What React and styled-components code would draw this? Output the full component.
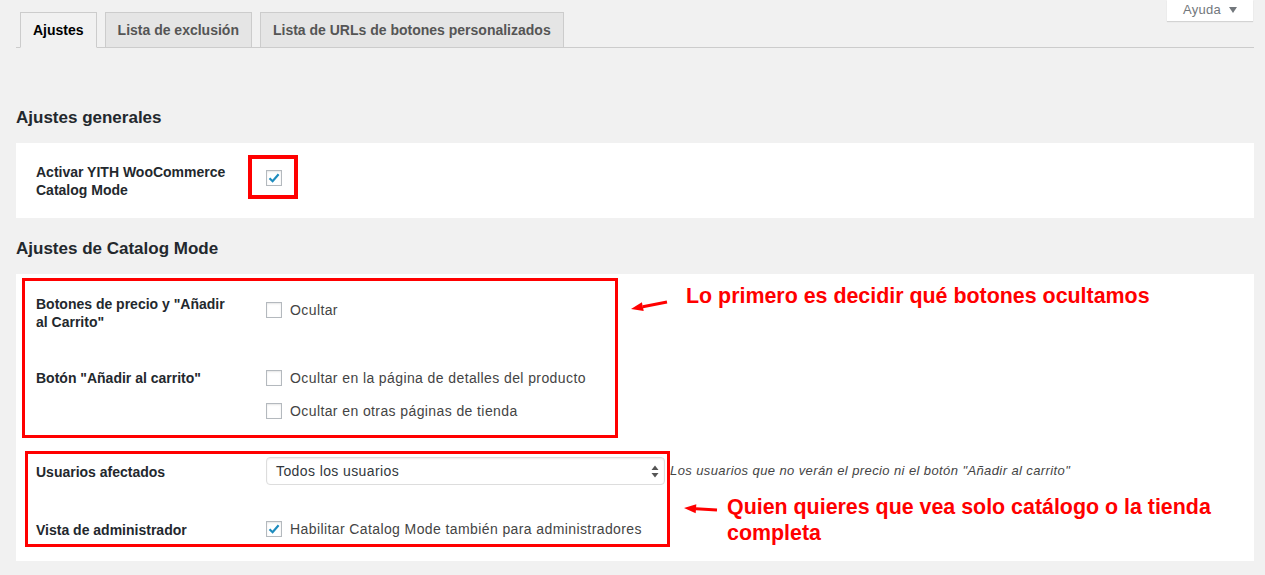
import styled, { createGlobalStyle } from "styled-components";

const GlobalStyle = createGlobalStyle`
  body {
    margin: 0;
    background: #f1f1f1;
    font-family: "Liberation Sans", Arial, sans-serif;
    color: #23282d;
  }
`;

const Page = styled.div`
  padding: 0 11px 0 16px;
`;

const Header = styled.header`
  display: grid;
`;

const TabBar = styled.nav`
  grid-area: 1 / 1;
  display: flex;
  gap: 8px;
  padding: 12px 0 0 4px;
  border-bottom: 1px solid #ccc;
`;

const Tab = styled.a`
  padding: 5px 12px;
  margin-bottom: -1px;
  font-size: 14px;
  font-weight: 700;
  line-height: 24px;
  border: 1px solid #ccc;
  border-bottom-color: ${(p) => (p.$active ? "#f1f1f1" : "#ccc")};
  background: ${(p) => (p.$active ? "#f1f1f1" : "#e5e5e5")};
  color: ${(p) => (p.$active ? "#000" : "#555")};
  text-decoration: none;
`;

const HelpButton = styled.button`
  grid-area: 1 / 1;
  justify-self: end;
  align-self: start;
  margin-right: 1px;
  width: 86px;
  height: 21px;
  padding: 0 0 2px;
  border: none;
  background: #fff;
  box-shadow: 0 1px 1px rgba(0, 0, 0, 0.12);
  font-family: "Liberation Sans", Arial, sans-serif;
  font-size: 13px;
  letter-spacing: 0.3px;
  color: #72777c;
  display: flex;
  align-items: center;
  justify-content: center;
  gap: 8px;
`;

const SectionTitle = styled.h2`
  margin: ${(p) => p.$top}px 0 ${(p) => p.$bottom}px;
  font-size: 17px;
  font-weight: 700;
  line-height: 24px;
  color: #23282d;
`;

const Panel = styled.section`
  position: relative;
  background: #fff;
  padding: 0 20px;
`;

const Row = styled.div`
  display: grid;
  grid-template-columns: 230px 1fr;
  padding: ${(p) => p.$pt}px 0 ${(p) => p.$pb}px;
`;

const Label = styled.div`
  max-width: 200px;
  margin-top: ${(p) => p.$offset || 0}px;
  font-size: 14px;
  font-weight: 700;
  line-height: 18px;
  color: #23282d;
`;

const Control = styled.div`
  display: flex;
  flex-direction: column;
  gap: 13px;
  margin-top: ${(p) => p.$offset || 0}px;
`;

const Option = styled.label`
  display: flex;
  align-items: center;
  gap: 8px;
  height: 20px;
  font-size: 14px;
  letter-spacing: 0.4px;
  color: #444;
`;

const Box = styled.span`
  width: 16px;
  height: 16px;
  box-sizing: border-box;
  border: 1px solid #b4b9be;
  box-shadow: inset 0 1px 2px rgba(0, 0, 0, 0.1);
  background: #fff;
  display: flex;
  align-items: center;
  justify-content: center;
`;

const SelectLine = styled.div`
  display: flex;
  align-items: center;
  gap: 5px;
`;

const Select = styled.div`
  width: 399px;
  height: 28px;
  box-sizing: border-box;
  padding: 0 5px 0 9px;
  border: 1px solid #ddd;
  border-radius: 4px;
  box-shadow: inset 0 1px 2px rgba(0, 0, 0, 0.07);
  display: flex;
  align-items: center;
  justify-content: space-between;
  font-size: 14px;
  letter-spacing: 0.4px;
  color: #32373c;
`;

const Hint = styled.span`
  margin-top: -2px;
  font-size: 13px;
  font-style: italic;
  letter-spacing: 0.4px;
  color: #444;
  white-space: nowrap;
`;

const RedFrame = styled.div`
  position: absolute;
  left: ${(p) => p.$left}px;
  top: ${(p) => p.$top}px;
  width: ${(p) => p.$w}px;
  height: ${(p) => p.$h}px;
  box-sizing: border-box;
  border: ${(p) => p.$thick}px solid #ff0000;
  pointer-events: none;
`;

const Arrow = styled.svg`
  position: absolute;
  left: ${(p) => p.$left}px;
  top: ${(p) => p.$top}px;
`;

const Note = styled.div`
  position: absolute;
  left: ${(p) => p.$left}px;
  top: ${(p) => p.$top}px;
  font-size: 21.4px;
  font-weight: 700;
  line-height: 26px;
  color: #ff0000;
  white-space: nowrap;
`;

const Check = ({ checked }) => (
  <Box>
    {checked && (
      <svg width="12" height="12" viewBox="0 0 12 12">
        <path d="M1.5 6.2 L4.6 9.2 L10.6 2.2" fill="none" stroke="#1e8cbe" strokeWidth="2.2" />
      </svg>
    )}
  </Box>
);

const CheckOption = ({ checked, children }) => (
  <Option>
    <Check checked={checked} />
    {children}
  </Option>
);

const Updown = () => (
  <svg width="8" height="13" viewBox="0 0 8 13">
    <path d="M4 0.5 L7.5 5 H0.5 Z M4 12.5 L7.5 8 H0.5 Z" fill="#555" />
  </svg>
);

const App = () => {
  return (
    <Page>
      <GlobalStyle />
      <Header>
        <TabBar>
          <Tab $active>Ajustes</Tab>
          <Tab>Lista de exclusión</Tab>
          <Tab>Lista de URLs de botones personalizados</Tab>
        </TabBar>
        <HelpButton>
          Ayuda
          <svg width="8" height="6" viewBox="0 0 8 6">
            <path d="M0 0 H8 L4 6 Z" fill="#72777c" />
          </svg>
        </HelpButton>
      </Header>

      <SectionTitle $top={58} $bottom={13}>Ajustes generales</SectionTitle>
      <Panel>
        <Row $pt={20} $pb={19}>
          <Label>Activar YITH WooCommerce Catalog Mode</Label>
          <Control $offset={5}>
            <CheckOption checked />
          </Control>
        </Row>
        <RedFrame $left={232} $top={12} $w={50} $h={44} $thick={4} />
      </Panel>

      <SectionTitle $top={19} $bottom={13}>Ajustes de Catalog Mode</SectionTitle>
      <Panel>
        <Row $pt={21} $pb={19}>
          <Label>Botones de precio y "Añadir al Carrito"</Label>
          <Control $offset={5}>
            <CheckOption>Ocultar</CheckOption>
          </Control>
        </Row>
        <Row $pt={19} $pb={19}>
          <Label>Botón "Añadir al carrito"</Label>
          <Control $offset={-1}>
            <CheckOption>Ocultar en la página de detalles del producto</CheckOption>
            <CheckOption>Ocultar en otras páginas de tienda</CheckOption>
          </Control>
        </Row>
        <Row $pt={17} $pb={17}>
          <Label $offset={6}>Usuarios afectados</Label>
          <SelectLine>
            <Select>
              Todos los usuarios
              <Updown />
            </Select>
            <Hint>Los usuarios que no verán el precio ni el botón "Añadir al carrito"</Hint>
          </SelectLine>
        </Row>
        <Row $pt={17} $pb={22}>
          <Label $offset={2}>Vista de administrador</Label>
          <Control>
            <CheckOption checked>Habilitar Catalog Mode también para administradores</CheckOption>
          </Control>
        </Row>

        <RedFrame $left={6} $top={4} $w={596} $h={160} $thick={3} />
        <RedFrame $left={9} $top={177} $w={645} $h={96} $thick={3} />

        <Arrow $left={612} $top={24} width="42" height="16" viewBox="0 0 42 16">
          <line x1="14.8" y1="8.7" x2="39" y2="4" stroke="#ff0000" strokeWidth="3" />
          <polygon points="3,11 15.7,13.1 13.9,4.3" fill="#ff0000" />
        </Arrow>
        <Note $left={670} $top={9}>Lo primero es decidir qué botones ocultamos</Note>

        <Arrow $left={664} $top={226} width="42" height="16" viewBox="0 0 42 16">
          <line x1="16" y1="8.7" x2="37" y2="10" stroke="#ff0000" strokeWidth="3" />
          <polygon points="4,8 15.7,13.2 16.3,4.2" fill="#ff0000" />
        </Arrow>
        <Note $left={711} $top={220}>
          Quien quieres que vea solo catálogo o la tienda
          <br />
          completa
        </Note>
      </Panel>
    </Page>
  );
};

export default App;
